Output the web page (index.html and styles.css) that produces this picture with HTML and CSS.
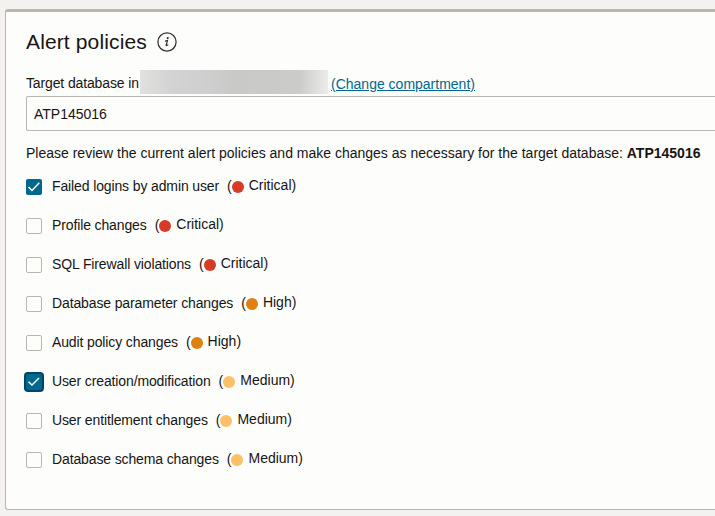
FILE: index.html
```html
<!DOCTYPE html>
<html lang="en">
<head>
<meta charset="utf-8">
<title>Alert policies</title>
<link rel="stylesheet" href="styles.css">
</head>
<body>
<main class="panel">
  <header class="panel-header">
    <h1>Alert policies</h1>
    <svg class="info" viewBox="0 0 20 20" aria-label="Information"><circle cx="10" cy="10" r="9.1"/><circle class="fill" cx="10.7" cy="6.1" r="1.1"/><path d="M8 9.2 10.4 8.6 9.2 13.1Q9 14.1 11.3 12.7"/></svg>
  </header>
  <div class="field-label"><span class="label-text">Target database in</span><span class="redacted"></span><a href="#">(Change compartment)</a></div>
  <div class="select">ATP145016</div>
  <p class="intro">Please review the current alert policies and make changes as necessary for the target database: <strong>ATP145016</strong></p>
  <ul class="policies">
    <li><span class="box checked"><svg viewBox="0 0 16 16"><path d="M2.5 8 6 11.5 13.3 3.8"/></svg></span><span class="name">Failed logins by admin user</span><span class="paren">(</span><i class="dot critical"></i><span class="level">Critical)</span></li>
    <li><span class="box"></span><span class="name">Profile changes</span><span class="paren">(</span><i class="dot critical"></i><span class="level">Critical)</span></li>
    <li><span class="box"></span><span class="name">SQL Firewall violations</span><span class="paren">(</span><i class="dot critical"></i><span class="level">Critical)</span></li>
    <li><span class="box"></span><span class="name">Database parameter changes</span><span class="paren">(</span><i class="dot high"></i><span class="level">High)</span></li>
    <li><span class="box"></span><span class="name">Audit policy changes</span><span class="paren">(</span><i class="dot high"></i><span class="level">High)</span></li>
    <li><span class="box checked focused"><svg viewBox="0 0 16 16"><path d="M2.5 7.7 6 11 13 4"/></svg></span><span class="name">User creation/modification</span><span class="paren">(</span><i class="dot medium"></i><span class="level">Medium)</span></li>
    <li><span class="box"></span><span class="name">User entitlement changes</span><span class="paren">(</span><i class="dot medium"></i><span class="level">Medium)</span></li>
    <li><span class="box"></span><span class="name">Database schema changes</span><span class="paren">(</span><i class="dot medium"></i><span class="level">Medium)</span></li>
  </ul>
</main>
</body>
</html>
```
FILE: styles.css
```css
* { box-sizing: border-box; }
body {
  margin: 0;
  padding: 9px 0 6px 5px;
  height: 516px;
  overflow: hidden;
  background: #f3f2f0;
  color: #161513;
  font: 14px/20px "Liberation Sans", Arial, sans-serif;
}
.panel {
  height: 501px;
  padding: 18px 0 0 20px;
  background: #fdfdfb;
  border: 1px solid #bbb5ae;
  border-top-width: 3px;
  border-right: 0;
  border-radius: 3px 0 0 3px;
}
.panel-header { display: flex; align-items: center; gap: 10.5px; height: 24px; }
h1 { margin: 0; font-size: 21px; line-height: 24px; font-weight: 400; letter-spacing: 0.13px; }
.info { width: 20px; height: 20px; fill: none; stroke: #33312e; stroke-width: 1.25; }
.info .fill { fill: #33312e; stroke: none; }
.field-label { display: flex; height: 24px; margin-top: 16px; white-space: nowrap; }
.label-text { width: 114px; line-height: 27px; letter-spacing: -0.13px; }
.redacted {
  width: 188px;
  height: 24px;
  margin-right: 3px;
  background: linear-gradient(90deg, #e1e1e0, #d2d2d2 18%, #cfcfcf 35%, #c9c9c8 50%, #cbcbca 85%, #ececeb);
}
a { color: #00688c; line-height: 28px; text-underline-offset: 1px; }
.select {
  height: 35px;
  margin-top: 2px;
  padding-left: 7px;
  border: 1px solid #bbb5ae;
  border-right: 0;
  border-radius: 2px 0 0 2px;
  line-height: 34px;
}
.intro { margin: 12px 0 0; white-space: nowrap; }
.policies { margin: 16px 0 0; padding: 0; list-style: none; }
.policies li { display: flex; height: 16px; margin-bottom: 23px; line-height: 15px; white-space: nowrap; }
.box {
  flex: none;
  width: 16px;
  height: 16px;
  margin-right: 10px;
  border: 1px solid #bbb5ae;
  border-radius: 2px;
}
.box.checked { border: 0; background: #00688c; }
.box.focused { box-shadow: 0 0 0 2px #00475f; }
.box svg { display: block; width: 16px; height: 16px; fill: none; stroke: #fff; stroke-width: 1.5; }
.name { margin-right: 8px; letter-spacing: -0.125px; }
.dot { flex: none; width: 12px; height: 12px; margin: 2px 5px 0 0; border-radius: 50%; }
.critical { background: #d63b25; }
.high { background: #df8010; }
.medium { background: #fcc069; }
.level { line-height: 13px; }
```
